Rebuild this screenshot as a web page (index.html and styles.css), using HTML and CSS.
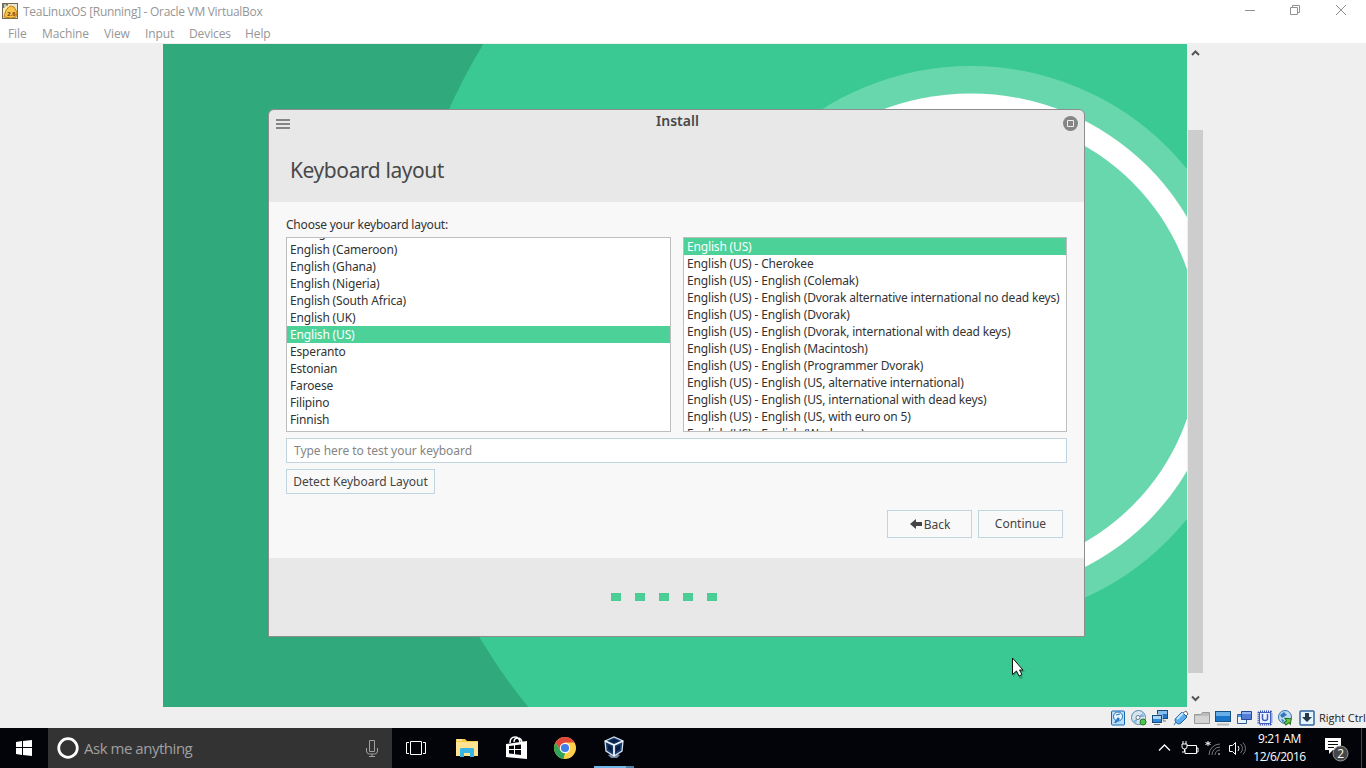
FILE: index.html
```html
<!DOCTYPE html>
<html lang="en">
<head>
<meta charset="utf-8">
<title>TeaLinuxOS [Running] - Oracle VM VirtualBox</title>
<link rel="stylesheet" href="styles.css">
</head>
<body>
<header class="titlebar">
  <svg class="app-icon" width="16" height="16" viewBox="0 0 16 16"><rect x=".5" y=".5" width="15" height="15" fill="#e9e4cd" stroke="#756951"/><path d="M1 1h5v4H1z" fill="#777"/><path d="M2 3h3M3 1v4" stroke="#ddd"/><path d="M2 14 4 7l4-4 4 1 3 5-1 5-5 1z" fill="#f7c64a" stroke="#c58012"/><path d="M2 9c0-3 2-5 5-6" fill="none" stroke="#fff0ae" stroke-width="1.5"/><text class="icon-version" x="5.2" y="12.5">2.6</text></svg>
  <span class="app-title">TeaLinuxOS [Running] - Oracle VM VirtualBox</span>
  <svg class="window-controls" width="110" height="22" viewBox="0 0 110 22" fill="none" stroke="#929292"><path d="M5 10.500h10M50.500 7.500h7v7h-7zM52.500 7.500v-2h7v7h-2M96 5l10 10M106 5 96 15"/></svg>
</header>
<nav class="menubar"><span class="m-file">File</span><span class="m-machine">Machine</span><span class="m-view">View</span><span class="m-input">Input</span><span class="m-devices">Devices</span><span class="m-help">Help</span></nav>
<main class="workspace">
  <section class="guest">
    <svg class="wallpaper" width="1024" height="663" viewBox="163 44 1024 663"><path fill="#30a97c" d="M163 44h1024v663H163z"/><circle cx="971" cy="344" r="572.5" fill="#3ac992"/><circle cx="971" cy="344" r="278" fill="#69d7ad"/><circle cx="971" cy="344" r="250.500" fill="#fff"/><circle cx="971" cy="344" r="228.500" fill="#69d7ad"/></svg>
    <div class="dialog">
      <div class="dialog-head">
        <div class="dialog-bar">
          <svg width="14" height="10" viewBox="0 0 14 10"><path d="M0 1h14M0 5h14M0 9h14" stroke="#858585" stroke-width="2"/></svg>
          <b class="install">Install</b>
          <svg class="maximize" width="15" height="15" viewBox="0 0 15 15"><circle cx="7.5" cy="7.5" r="7.5" fill="#858585"/><path d="M4.500 4.500h6v6h-6z" fill="#858585" stroke="#eee"/></svg>
        </div>
        <h1>Keyboard layout</h1>
      </div>
      <div class="dialog-body">
        <label class="choose">Choose your keyboard layout:</label>
        <div class="lists">
          <ul class="list left"><li>Dzongkha</li><li>English (Cameroon)</li><li>English (Ghana)</li><li>English (Nigeria)</li><li>English (South Africa)</li><li>English (UK)</li><li class="selected">English (US)</li><li>Esperanto</li><li>Estonian</li><li>Faroese</li><li>Filipino</li><li>Finnish</li><li>French</li></ul>
          <ul class="list right"><li class="selected">English (US)</li><li>English (US) - Cherokee</li><li>English (US) - English (Colemak)</li><li>English (US) - English (Dvorak alternative international no dead keys)</li><li>English (US) - English (Dvorak)</li><li>English (US) - English (Dvorak, international with dead keys)</li><li>English (US) - English (Macintosh)</li><li>English (US) - English (Programmer Dvorak)</li><li>English (US) - English (US, alternative international)</li><li>English (US) - English (US, international with dead keys)</li><li>English (US) - English (US, with euro on 5)</li><li>English (US) - English (Workman)</li></ul>
        </div>
        <input class="test" placeholder="Type here to test your keyboard" aria-label="Keyboard test">
        <button class="detect">Detect Keyboard Layout</button>
        <div class="actions">
          <button class="action back"><svg width="12" height="10" viewBox="0 0 12 10"><path d="M0 5 6 0v3h6v4H6v3z" fill="#444"/></svg><span>Back</span></button>
          <button class="action continue">Continue</button>
        </div>
      </div>
      <div class="progress"><i></i><i></i><i></i><i></i><i></i></div>
    </div>
    <svg class="cursor" width="16" height="23" viewBox="0 0 16 23"><path d="M2 2v18l4-4 3 6 3-1-3-6h5z" fill="#000" opacity=".2"/><path d="M1.500 1v16.500l4-3.500 2.500 5 3-1.500-2.500-4.500H12z" fill="#fff" stroke="#111"/></svg>
  </section>
  <div class="scrollbar">
    <svg width="15" height="18" viewBox="0 0 15 18"><path d="M4 11l3.500-3.500L11 11" fill="none" stroke="#555" stroke-width="2"/></svg>
    <div class="thumb"></div>
    <svg width="15" height="18" viewBox="0 0 15 18"><path d="M4 7.500 7.500 11 11 7.500" fill="none" stroke="#555" stroke-width="2"/></svg>
  </div>
</main>
<footer class="status">
  <div class="devices">
    <svg viewBox="0 0 16 16"><rect x="1.500" y="1" width="13" height="14" rx="1" fill="#b7ddfa" stroke="#1769b2"/><circle cx="8" cy="6.500" r="4.500" fill="#eaf6ff" stroke="#246eb0"/><path d="m4 13 4-6 2 2-4 4z" fill="#2776c2"/><path d="m6 5 4-1" stroke="#246eb0"/></svg>
    <svg viewBox="0 0 16 16"><circle cx="7.500" cy="7.500" r="7" fill="#d8e5ef" stroke="#5288ad"/><path d="m7 7 5-4 1 4zM7 8l-5 3 3 2z" fill="#7db5dc"/><circle cx="7" cy="7.500" r="2" fill="#fff" stroke="#678"/><circle cx="12" cy="12" r="3" fill="#4cc652" stroke="#247829"/></svg>
    <svg viewBox="0 0 16 16"><rect x="5.500" y=".5" width="10" height="8" fill="#2875c5" stroke="#164b7d"/><path d="M6 1h9v3H6z" fill="#84bef0"/><path d="M11 9v2h3" stroke="#777" fill="none"/><rect x=".5" y="5.500" width="9" height="7" fill="#3587d6" stroke="#fff" stroke-width="2"/><rect x=".5" y="5.500" width="9" height="7" fill="#3587d6" stroke="#164b7d"/><path d="M1 6h8v3H1z" fill="#aed6f5"/><path d="M2 14.500h6" stroke="#777"/></svg>
    <svg viewBox="0 0 16 16"><path d="m10 3 3-2 2 3-3 3z" fill="#fff" stroke="#666"/><path d="m3 8 6-6 5 5-6 6c-3 3-8-2-5-5z" fill="#5caceb" stroke="#1c63a6"/><path d="m4 9 6-6" stroke="#c9e9ff" stroke-width="2"/><path d="m3 12-2 3" stroke="#256aaa"/></svg>
    <svg viewBox="0 0 16 16"><path d="M.5 4.500h6l2-2h7v11H.5z" fill="#bcbcbc" stroke="#999"/><path d="M1 6h14v7H1z" fill="#d3d3d3"/></svg>
    <svg viewBox="0 0 16 16"><rect x=".5" y="1.500" width="15" height="10" fill="#1975c8" stroke="#175083"/><path d="M1 2h14v4H1z" fill="#68aee7"/><path d="M2 14.500h12" stroke="#bbb" stroke-width="2"/></svg>
    <svg viewBox="0 0 16 16"><path d="M1.500 4.500h9v9h-9z" fill="#e9f3fb" stroke="#305d91"/><path d="M2 5h8v2H2z" fill="#4d9be0"/><path d="M5.500 1.500h10v8h-10z" fill="#537ed7" stroke="#274b9b"/><path d="M6 2h9v2H6z" fill="#91b4f5"/></svg>
    <svg viewBox="0 0 16 16"><rect x="2" y="2" width="12" height="12" rx="1" fill="#d5e6ff" stroke="#3652bb" stroke-width="3" stroke-dasharray="1 1"/><rect x="2.500" y="2.500" width="11" height="11" fill="#eaf1ff" stroke="#425ec5"/><path d="M5.500 4v4.500q0 2 2.500 2t2.500-2V4" fill="none" stroke="#4563bc" stroke-width="1.5"/></svg>
    <svg viewBox="0 0 16 16"><circle cx="7" cy="7" r="6.500" fill="#bcdcf7" stroke="#3a74a7"/><path d="m2 5 4-3 3 3-5 3zM3 9l3 1-1 3z" fill="#3478ba"/><path d="M6 10h3V7l5 4-4 4v-2H6z" fill="#62ca43" stroke="#286f28" transform="rotate(-35 10 11)"/></svg>
    <svg viewBox="0 0 16 16"><rect x="1" y="1" width="14" height="14" rx="1" fill="#e5f3ff" stroke="#33679c" stroke-width="1.5"/><path d="M6 3h4v4h3l-5 5-5-5h3z" fill="#273849"/></svg>
  </div>
  <span class="host">Right Ctrl</span>
</footer>
<footer class="taskbar">
  <div class="start"><svg width="16" height="16" viewBox="0 0 16 16"><path d="m0 2 6-1v6H0zM7 1l9-1v7H7zM0 8h6v7l-6-1zM7 8h9v8l-9-1z" fill="#fff"/></svg></div>
  <div class="search"><svg width="22" height="22" viewBox="0 0 22 22"><circle cx="11" cy="11" r="9.300" fill="none" stroke="#fff" stroke-width="2.700"/></svg><span class="ask">Ask me anything</span><svg class="mic" width="12" height="17" viewBox="0 0 12 17"><path d="M3.500.5h5v11h-5zM.5 8v3q0 3 3 3h5q3 0 3-3V8M6 14v2.500M3 16.500h6" fill="none" stroke="#a0a0a0"/></svg></div>
  <div class="apps">
    <div class="taskview"><svg width="20" height="14" viewBox="0 0 20 14"><path d="M4.500.5h11v13h-11zM3 1.500H.5v11H3M17 1.500h2.500v11H17" fill="none" stroke="#fff"/></svg></div>
    <div class="explorer"><svg width="22" height="20" viewBox="0 0 22 20"><path d="M0 1h9l2 2h11v15H0z" fill="#f8c949"/><path d="M0 4h22v14H0z" fill="#ffe391"/><path d="M1 2h5" stroke="#fff"/><path d="M4 19v-8l1-1h12l1 1v8h-4v-4H8v4z" fill="#39b5e5"/></svg></div>
    <div class="store"><svg width="21" height="24" viewBox="0 0 21 24"><path d="M0 8 21 5v18L0 21z" fill="#fff"/><path d="M4 7q0-6 5-6 4 0 5 5M8 6q0-4 4-4 3 0 4 4" fill="none" stroke="#fff" stroke-width="1.500"/><path d="m3 10 5-.5V13H3zM9 9.300l6-.8V13H9zM3 14h5v4l-5-.5zM9 14h6v5l-6-.8z" fill="#05070b"/></svg></div>
    <div class="chrome"><svg width="22" height="22" viewBox="0 0 22 22"><circle cx="11" cy="11" r="11" fill="#ffd04a"/><path d="M1.500 5.500A11 11 0 0 1 20.500 5.500H11L6.500 13.500z" fill="#e1473b"/><path d="M1.500 5.500 6.300 13.500 11 16l-1.500 5.900A11 11 0 0 1 1.500 5.500z" fill="#30a35a"/><circle cx="11" cy="11" r="5.200" fill="#fff"/><circle cx="11" cy="11" r="4.100" fill="#427ee9"/></svg></div>
    <div class="active"><svg width="20" height="23" viewBox="0 0 20 23"><path d="m4 19 6-2 6 2-3 3H7z" fill="#7686a6"/><path d="m1 5 9-4 9 4-1 10-8 5-8-5z" fill="#163a6c" stroke="#d4dfed" stroke-width="1.300"/><path d="m1 5 9 4 9-4M10 9v11" fill="none" stroke="#f1f5fa" stroke-width="1.800"/><path d="m5 5 5-2 5 2-5 2z" fill="#0a2146"/><path d="m4 9 4 2v5l-4-3zM16 9l-4 2v5l4-3z" fill="#091d3e"/></svg><i class="underline"></i></div>
  </div>
  <div class="tray">
    <svg width="78" height="20" viewBox="0 0 78 20" fill="none"><path d="m1 12.500 5.500-5.500 5.500 5.500" stroke="#fff" stroke-width="1.300"/><path d="M29 7.500h9.500v8H27v-4M39 10h1v4h-1" stroke="#fff"/><path d="M24 6v3q0 2 2.500 2T29 9V6zM25 6V3M28 6V3M26.500 11v3H24" stroke="#fff"/><path d="M50 3v5M47.500 4.500l5 2M52.500 4.500l-5 2" stroke="#fff"/><path d="M51 17A11 11 0 0 1 62 6M54 17a8 8 0 0 1 8-8M57 17a5 5 0 0 1 5-5" stroke="#777"/><path d="M60 15h2v2h-2z" fill="#777"/><path d="M71.500 7.500h3l3-3v12l-3-3h-3z" stroke="#fff"/></svg>
    <svg class="waves" width="10" height="20" viewBox="0 0 10 20" fill="none"><path d="M1 8q2 2.500 0 5" stroke="#fff"/><path d="M3.500 6q4 4.500 0 9M6 4.500q5 6 0 12" stroke="#777"/></svg>
    <div class="clock"><span class="time">9:21 AM</span><span class="date">12/6/2016</span></div>
    <svg class="notice" width="26" height="26" viewBox="0 0 26 26"><path d="M0 1h16v12H8l-4 4v-4H0z" fill="#fff"/><path d="M3 4.500h10M3 7.500h10M3 10.500h6" stroke="#080a0e"/><circle cx="15.500" cy="16.500" r="7.500" fill="#464646" stroke="#999"/><text class="badge" x="12.200" y="21">2</text></svg>
    <i class="show-desktop"></i>
  </div>
</footer>
</body>
</html>
```
FILE: styles.css
```css
*{box-sizing:border-box}
body{margin:0;width:1366px;height:768px;overflow:hidden;background:#efefef;font-family:"Open Sans",sans-serif;font-size:12px;display:flex;flex-direction:column}
svg{display:block;flex:none}
span,b,label,li{white-space:nowrap}
.titlebar{height:22px;background:#fff;display:flex;align-items:center;padding-left:2px;color:#969696;flex:none}
.app-icon{margin-top:0}
.icon-version{font:bold 6px "Liberation Sans",sans-serif;fill:#6e3416}
.app-title{margin-left:5px;line-height:22px;font-size:12px;letter-spacing:-.29px;margin-top:2px}
.window-controls{margin-left:auto;margin-right:16px}
.menubar{height:21px;background:#fff;color:#969696;display:flex;padding-left:8px;line-height:23px;letter-spacing:-.1px;flex:none}
.m-file{width:34px}.m-machine{width:62px}.m-view{width:41px}.m-input{width:44px}.m-devices{width:56px}
.workspace{height:665px;padding:1px 0 0 163px;display:flex;flex:none}
.guest{position:relative;width:1024px;height:663px;overflow:hidden;flex:none}
.dialog{position:absolute;left:105px;top:65px;width:817px;height:528px;background:#e8e8e8;border:1px solid #8d8d8d;border-radius:6px 6px 0 0;overflow:hidden;font-family:"Noto Sans",sans-serif}
.dialog-head{height:92px;color:#484848}
.dialog-bar{height:28px;display:flex;justify-content:space-between;align-items:center;padding:0 6px 0 7px}
.install{font-size:14px;font-weight:600;line-height:20px;margin:-6px 0 0 2px}
.maximize{margin-top:-2px}
h1{font-size:21px;font-weight:400;line-height:28px;letter-spacing:-.42px;margin:18px 0 0 21px}
.dialog-body{height:356px;padding:14px 17px 0;background:#f8f8f8;display:flex;flex-direction:column;color:#333}
.choose{height:21px;line-height:17px;letter-spacing:-.21px}
.lists{display:flex;gap:12px;height:195px}
.list{list-style:none;margin:0;padding:0;border:1px solid #bebebe;background:#fff;overflow:hidden;height:195px;letter-spacing:-.165px}
.left{width:385px}.right{width:384px}
.left li:first-child{margin-top:-14px}
.list li{height:17px;line-height:18px;padding-left:3px}
.list .selected{background:#4cd299;color:#fff}
.test{width:781px;height:25px;border:1px solid #c1d5e0;background:#fff;margin:6px 0;padding:0 7px;font:12px "Noto Sans",sans-serif;letter-spacing:-.03px;outline:0}
.test::placeholder{color:#858585;opacity:1}
button{font:12px "Noto Sans",sans-serif;color:#444;background:#f9f9f9;border:1px solid #c1d5e0;padding:0;white-space:nowrap}
.detect{width:149px;height:25px}
.actions{display:flex;justify-content:flex-end;gap:6px;margin:16px 4px 0 0}
.action{width:85px;height:28px}
.back{display:flex;align-items:center;justify-content:center;gap:2px;padding-left:1px}
.continue{padding-bottom:2px}
.progress{display:flex;justify-content:center;gap:14px;padding-top:35px;margin-right:25px}
.progress i{width:10px;height:8px;background:#4bce95}
.cursor{position:absolute;left:848px;top:613px}
.scrollbar{width:16px;padding-left:1px;display:flex;flex-direction:column;height:663px}
.scrollbar svg{height:18px}
.thumb{height:543px;background:#cdcdcd;margin:68px 0 16px;flex:none}
.status{height:20px;display:flex;align-items:center;padding:0 1px 0 1110px;flex:none}
.devices{display:flex;gap:5px}
.devices svg{width:16px;height:16px}
.host{margin:-2px 0 0 4px;font-size:11px;letter-spacing:-.05px;color:#222}
.taskbar{height:40px;background:#020409;display:flex;color:#fff;flex:none}
.start{width:48px;display:flex;align-items:center;justify-content:center}
.search{width:344px;background:#333;display:flex;align-items:center;padding:0 14px 0 9px}
.ask{font-size:15px;letter-spacing:-.47px;margin-left:5px;color:#a0a0a0}
.mic{margin-left:auto}
.apps{display:flex}
.apps>div{width:49px;display:flex;align-items:center;justify-content:center}
.apps .taskview{width:48px}
.apps .explorer{width:54px}
.apps .store{width:44px}
.apps .chrome{width:54px}
.apps .active{width:40px;margin-left:2px;flex-direction:column;justify-content:space-between;padding-top:8px}
.underline{width:40px;height:2px;background:linear-gradient(90deg,#72b7e9 32px,#4c7fa6 32px)}
.tray{display:flex;margin-left:auto;align-items:center;height:40px}
.waves{margin-left:1px}
.clock{width:63px;display:flex;flex-direction:column;align-items:center;line-height:18px;letter-spacing:-.5px;margin-left:1px}
.time{letter-spacing:-.3px}
.notice{margin-left:14px;margin-top:4px}
.badge{font:12px "Open Sans",sans-serif;fill:#fff}
.show-desktop{width:1px;height:40px;background:#454545;margin:0 4px 0 10px}
```
